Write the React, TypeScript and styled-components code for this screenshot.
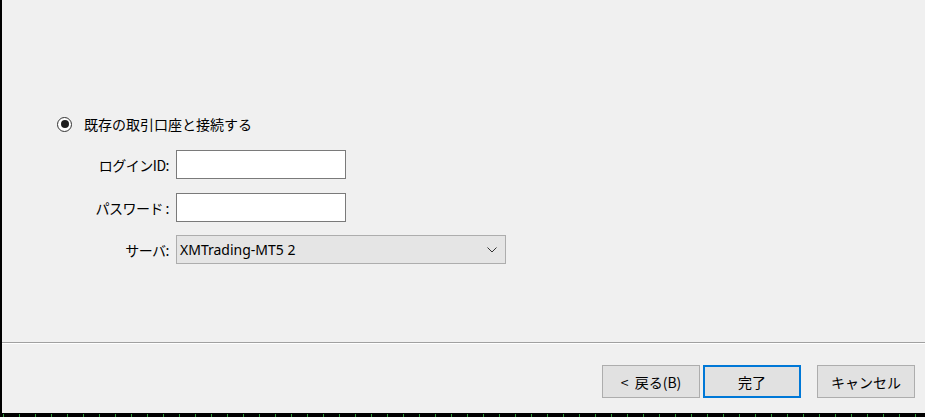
import React from "react";
import styled, { createGlobalStyle } from "styled-components";

const Global = createGlobalStyle`
  html, body { margin: 0; padding: 0; background: #f0f0f0; }
  body { font-family: "Noto Sans CJK JP", "Noto Sans", sans-serif; color: #000; }
  * { box-sizing: border-box; }
`;

const Frame = styled.div`
  width: 925px;
  height: 417px;
  display: flex;
  flex-direction: column;
  background: #f0f0f0;
  border-left: 2px solid #000;
  overflow: hidden;
`;

const Content = styled.div`
  height: 342px;
  padding: 114px 0 0 55px;
`;

const RadioRow = styled.label`
  display: flex;
  align-items: center;
  gap: 12px;
  height: 20px;
  font-size: 14px;
  line-height: 20px;
`;

const Radio = styled.span`
  width: 15px;
  height: 15px;
  border: 1.5px solid #333;
  border-radius: 50%;
  display: flex;
  align-items: center;
  justify-content: center;
  background: #fff;
  &::after {
    content: "";
    width: 8px;
    height: 8px;
    border-radius: 50%;
    background: #1e1e1e;
  }
`;

const FormGrid = styled.div`
  margin-top: 16px;
  display: grid;
  grid-template-columns: 112px auto;
  column-gap: 7px;
  row-gap: 14px;
  align-items: center;
`;

const Label = styled.span`
  justify-self: end;
  font-size: 14px;
  letter-spacing: -0.5px;
`;

const TextBox = styled.div`
  width: 170px;
  height: 29px;
  background: #fff;
  border: 1px solid #7a7a7a;
  justify-self: start;
`;

const Select = styled.div`
  width: 330px;
  height: 29px;
  margin-top: -1px;
  background: #e5e5e5;
  border: 1px solid #adadad;
  display: flex;
  align-items: center;
  justify-content: space-between;
  padding: 0 8px 0 3px;
  font-family: "Noto Sans", sans-serif;
  font-size: 14px;
  justify-self: start;
`;

const Separator = styled.div`
  height: 2px;
  border-top: 1px solid #a0a0a0;
  border-bottom: 1px solid #fff;
`;

const Footer = styled.div`
  flex: 1;
  display: flex;
  justify-content: flex-end;
  align-items: flex-start;
  padding: 21px 10px 0 0;
`;

const Button = styled.button<{ $primary?: boolean; $gap?: number }>`
  width: 98px;
  height: 33px;
  margin-left: ${(p) => p.$gap ?? 0}px;
  background: #e1e1e1;
  border: ${(p) => (p.$primary ? "2px solid #0078d7" : "1px solid #adadad")};
  font-family: "Noto Sans CJK JP", sans-serif;
  font-size: 14px;
  color: #000;
  padding: 0;
  display: flex;
  align-items: center;
  justify-content: center;
  white-space: pre;
`;

const Strip = styled.div`
  height: 4px;
  background: #000 linear-gradient(to right, #2f9b3a 0 1px, transparent 1px) 17px 1px / 16px 3px repeat-x;
`;

export default function App() {
  return (
    <>
      <Global />
      <Frame>
        <Content>
          <RadioRow>
            <Radio />
            既存の取引口座と接続する
          </RadioRow>
          <FormGrid>
            <Label>ログインID:</Label>
            <TextBox />
            <Label>パスワード :</Label>
            <TextBox />
            <Label>サーバ:</Label>
            <Select>
              <span>XMTrading-MT5 2</span>
              <svg width="10" height="6" viewBox="0 0 10 6">
                <path d="M0.5 0.5 L5 5 L9.5 0.5" fill="none" stroke="#333" strokeWidth="1" />
              </svg>
            </Select>
          </FormGrid>
        </Content>
        <Separator />
        <Footer>
          <Button>{"<  戻る(B)"}</Button>
          <Button $primary $gap={3}>完了</Button>
          <Button $gap={16}>キャンセル</Button>
        </Footer>
        <Strip />
      </Frame>
    </>
  );
}
